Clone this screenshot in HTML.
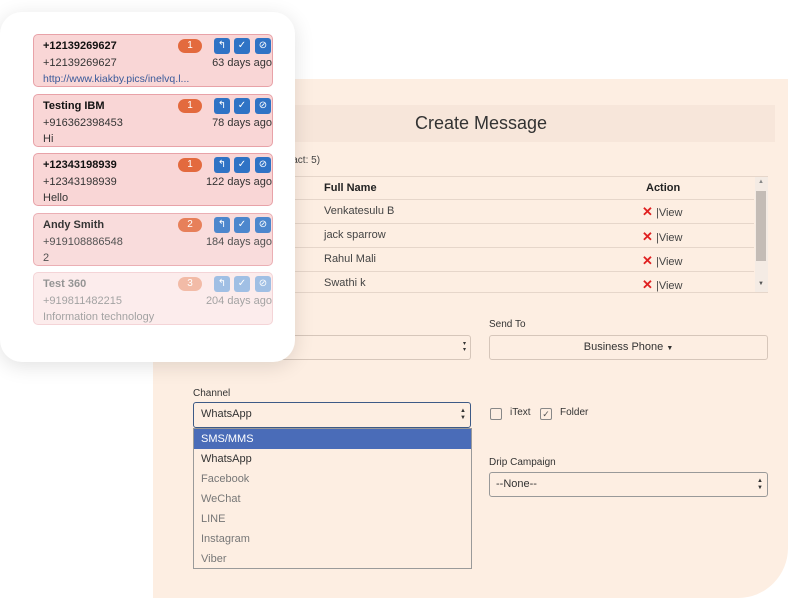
<!DOCTYPE html>
<html><head><style>
*{box-sizing:border-box;margin:0;padding:0}
body{width:788px;height:598px;background:#fff;position:relative;overflow:hidden;font-family:"Liberation Sans",sans-serif;}
.panel{position:absolute;left:153px;top:79px;width:635px;height:519px;background:#fdeee2;border-bottom-right-radius:50px}
.abs{position:absolute}
.title{left:153px;top:105px;width:622px;height:37px;background:#f7e6da;font-size:18px;color:#333;text-align:center;line-height:37px;padding-left:34px}
.tbl{left:260px;top:176px;width:508px;height:117px;border:1px solid #e6d6ca}
.row{position:absolute;left:0;width:493px;height:24px;border-bottom:1px solid #e6d6ca;font-size:11px;color:#444}
.x{color:#e02020;font-weight:bold;font-size:13px}
.lbl{font-size:10px;color:#333}
.sel{border:1px solid #d6c6ba;border-radius:3px;background:#fdeee2}
.card{left:0;top:12px;width:295px;height:350px;background:#fff;border-radius:22px;box-shadow:0 4px 20px rgba(0,0,0,.12)}
.it{position:absolute;left:33px;width:240px;height:53px;border:1.5px solid #e8a2a8;border-radius:5px;background:#f9d6d6;font-size:11px;color:#333;padding:3px 9px;line-height:16.5px;white-space:nowrap}
.it b{color:#111}
.badge{position:absolute;left:144px;top:4px;width:24px;height:14px;border-radius:8px;background:#e36a3e;color:#fff;font-size:10px;text-align:center;line-height:14px}
.btn{position:absolute;top:3px;width:16px;height:16px;background:#2f73c5;border-radius:3px;color:#fff;font-size:10px;text-align:center;line-height:16px}
.ago{position:absolute;right:0;top:20px;font-size:11px;color:#333}
.opt{height:20px;line-height:20px;padding-left:7px;font-size:11px;color:#777}
</style></head><body>
<div class="panel"></div>
<div class="abs title">Create Message</div>
<div class="abs" style="left:270px;top:155px;font-size:10px;color:#444">(contact: 5)</div>
<div class="abs tbl">
 <div class="row" style="top:0;height:23px;font-weight:bold;color:#222"><span class="abs" style="left:63px;top:5px">Full Name</span><span class="abs" style="left:385px;top:5px">Action</span></div>
 <div class="row" style="top:23px"><span class="abs" style="left:63px;top:5px">Venkatesulu B</span><span class="abs" style="left:381px;top:4px"><span class="x">✕</span> |View</span></div>
 <div class="row" style="top:47px"><span class="abs" style="left:63px;top:5px">jack sparrow</span><span class="abs" style="left:381px;top:5px"><span class="x">✕</span> |View</span></div>
 <div class="row" style="top:71px"><span class="abs" style="left:63px;top:5px">Rahul Mali</span><span class="abs" style="left:381px;top:5px"><span class="x">✕</span> |View</span></div>
 <div class="row" style="top:95px;border:none"><span class="abs" style="left:63px;top:5px">Swathi k</span><span class="abs" style="left:381px;top:5px"><span class="x">✕</span> |View</span></div>
 <div class="abs" style="left:494px;top:0;width:13px;height:115px;background:#f4ebe4"></div>
 <div class="abs" style="left:495px;top:14px;width:10px;height:70px;background:#c4bcb6"></div>
 <div class="abs" style="left:497px;top:2px;font-size:6px;color:#888">▲</div>
 <div class="abs" style="left:497px;top:104px;font-size:6px;color:#555">▼</div>
</div>
<div class="abs lbl" style="left:489px;top:319px">Send To</div>
<div class="abs sel" style="left:200px;top:335px;width:271px;height:25px;border-left:none"><span class="abs" style="right:4px;top:5px;font-size:6px;color:#333;line-height:6px">▾<br>▾</span></div>
<div class="abs sel" style="left:489px;top:335px;width:279px;height:25px;text-align:center;font-size:11px;line-height:23px;color:#333">Business Phone <span style="font-size:7px">▼</span></div>
<div class="abs lbl" style="left:193px;top:388px">Channel</div>
<div class="abs" style="left:193px;top:402px;width:278px;height:26px;border:1.5px solid #3d5a86;border-radius:3px;font-size:11px;line-height:23px;padding-left:7px;color:#333">WhatsApp<span class="abs" style="right:4px;top:5px;font-size:6px;line-height:7px">▲<br>▼</span></div>
<div class="abs" style="left:193px;top:428px;width:279px;height:141px;border:1px solid #9a9a9a;background:#fdeee2">
 <div class="opt" style="background:#4a6cb8;color:#fff">SMS/MMS</div>
 <div class="opt" style="color:#333">WhatsApp</div>
 <div class="opt">Facebook</div><div class="opt">WeChat</div><div class="opt">LINE</div><div class="opt">Instagram</div><div class="opt">Viber</div>
</div>
<div class="abs" style="left:490px;top:408px;width:12px;height:12px;border:1px solid #888;border-radius:2px"></div>
<div class="abs lbl" style="left:510px;top:407px">iText</div>
<div class="abs" style="left:540px;top:408px;width:12px;height:12px;border:1px solid #888;border-radius:2px;font-size:9px;line-height:10px;text-align:center;color:#555">✓</div>
<div class="abs lbl" style="left:560px;top:407px">Folder</div>
<div class="abs lbl" style="left:489px;top:457px">Drip Campaign</div>
<div class="abs" style="left:489px;top:472px;width:279px;height:25px;border:1px solid #999;border-radius:3px;font-size:11px;line-height:23px;padding-left:6px;color:#333">--None--<span class="abs" style="right:4px;top:5px;font-size:6px;line-height:7px">▲<br>▼</span></div>

<div class="abs card"></div>
<div class="it" style="top:34px"><b>+12139269627</b><br>+12139269627<br><span style="color:#3a5a9a;font-size:10.5px">http://www.kiakby.pics/inelvq.l...</span><div class="badge">1</div><div class="btn" style="left:180px">↰</div><div class="btn" style="left:200px">✓</div><div class="btn" style="left:221px">⊘</div><div class="ago">63 days ago</div></div>
<div class="it" style="top:94px"><b>Testing IBM</b><br>+916362398453<br>Hi<div class="badge">1</div><div class="btn" style="left:180px">↰</div><div class="btn" style="left:200px">✓</div><div class="btn" style="left:221px">⊘</div><div class="ago">78 days ago</div></div>
<div class="it" style="top:153px"><b>+12343198939</b><br>+12343198939<br>Hello<div class="badge">1</div><div class="btn" style="left:180px">↰</div><div class="btn" style="left:200px">✓</div><div class="btn" style="left:221px">⊘</div><div class="ago">122 days ago</div></div>
<div class="it" style="top:213px;opacity:.85"><b>Andy Smith</b><br>+919108886548<br>2<div class="badge">2</div><div class="btn" style="left:180px">↰</div><div class="btn" style="left:200px">✓</div><div class="btn" style="left:221px">⊘</div><div class="ago">184 days ago</div></div>
<div class="it" style="top:272px;opacity:.45"><b>Test 360</b><br>+919811482215<br>Information technology<div class="badge">3</div><div class="btn" style="left:180px">↰</div><div class="btn" style="left:200px">✓</div><div class="btn" style="left:221px">⊘</div><div class="ago">204 days ago</div></div>
</body></html>
